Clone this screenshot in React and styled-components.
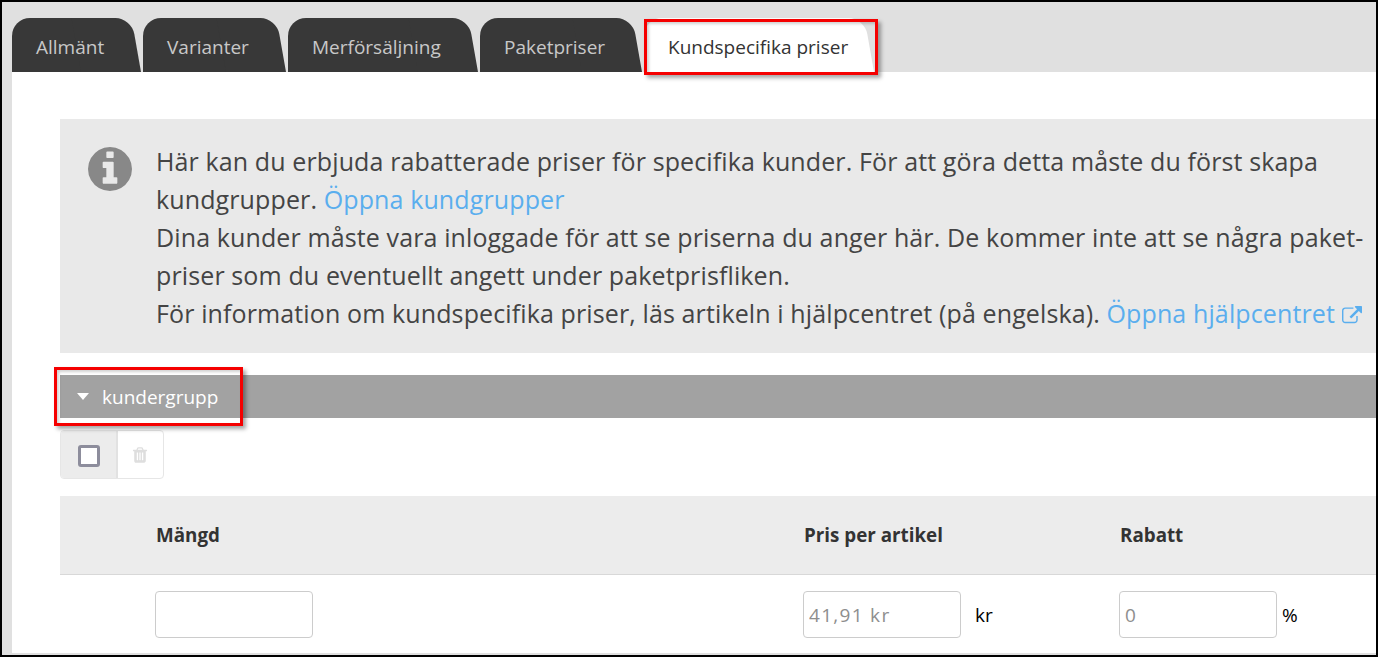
import React from "react";
import styled, { createGlobalStyle } from "styled-components";

const Global = createGlobalStyle`
  html, body { margin: 0; padding: 0; background: #fff; }
  * { box-sizing: border-box; }
`;

const Frame = styled.div`
  position: relative;
  width: 1378px;
  height: 657px;
  border: 2px solid #000;
  background: #e0e0e0;
  overflow: hidden;
  font-family: "Open Sans", sans-serif;
  color: #444;
`;

const TabBar = styled.div`
  display: flex;
  gap: 2px;
  height: 70px;
  padding: 16px 0 0 10px;
`;

const Tab = styled.div`
  position: relative;
  height: 54px;
  display: flex;
  align-items: center;
  width: ${(p) => p.$width}px;
  margin-right: 15px;
  padding: 3px 0 0 24px;
  font-size: 19px;
  color: ${(p) => (p.$active ? "#333" : "#c8c8c8")};

  &::before {
    content: "";
    position: absolute;
    top: 0;
    bottom: 0;
    left: 0;
    right: 20px;
    background: ${(p) => (p.$active ? "#fff" : "#383838")};
    border-top-left-radius: 18px;
  }
  &::after {
    content: "";
    position: absolute;
    top: 0;
    bottom: 0;
    right: -15px;
    width: 60px;
    background: ${(p) => (p.$active ? "#fff" : "#383838")};
    border-top-right-radius: 16px;
    transform: skewX(10deg);
    transform-origin: bottom right;
  }
  & > span { position: relative; z-index: 1; white-space: nowrap; }
`;

const Content = styled.div`
  margin-left: 10px;
  height: 581px;
  background: #fff;
  padding: 47px 0 0 48px;
`;

const InfoPanel = styled.div`
  display: flex;
  height: 234px;
  background: #e9e9e9;
  padding: 22.5px 0 0 28px;
`;

const InfoIcon = styled.svg`
  flex: none;
  width: 44px;
  height: 44px;
  margin-top: 5.5px;
  fill: #888;
`;

const InfoText = styled.p`
  margin: 0 0 0 24px;
  font-size: 25px;
  letter-spacing: 0.12px;
  line-height: 38px;
  white-space: nowrap;
  color: #444;
`;

const InfoLink = styled.a`
  color: #5aaeee;
  text-decoration: none;
`;

const LinkIcon = styled.svg`
  width: 20px;
  height: 20px;
  margin-left: 7px;
  vertical-align: -3px;
  fill: #5aaeee;
`;

const GroupBar = styled.div`
  display: flex;
  align-items: center;
  height: 43px;
  margin-top: 22px;
  padding-left: 17px;
  gap: 13px;
  background: #a2a2a2;
  color: #fff;
  font-size: 19px;
`;

const Caret = styled.span`
  width: 0;
  height: 0;
  border-left: 6px solid transparent;
  border-right: 6px solid transparent;
  border-top: 7px solid #fff;
`;

const ButtonGroup = styled.div`
  display: flex;
  width: 104px;
  height: 49px;
  margin-top: 12px;
  border: 1px solid #e6e6e6;
  border-radius: 4px;
  overflow: hidden;
`;

const CheckCell = styled.div`
  display: flex;
  align-items: center;
  justify-content: center;
  width: 57px;
  padding-top: 2px;
  background: #ececec;
  border-right: 2px solid #e2e2e2;
`;

const CheckBox = styled.div`
  width: 22px;
  height: 22px;
  border: 3px solid #8d8d9c;
  border-radius: 3px;
  background: #fff;
`;

const TrashCell = styled.div`
  flex: 1;
  display: flex;
  align-items: center;
  justify-content: center;
  padding-right: 2px;
`;

const TrashIcon = styled.svg`
  width: 18px;
  height: 18px;
  fill: #dedede;
`;

const Row = styled.div`
  display: grid;
  grid-template-columns: 95px 648px 316px 1fr;
`;

const HeadRow = styled(Row)`
  height: 79px;
  margin-top: 17px;
  background: #ececec;
  border-bottom: 1px solid #d8d8d8;
  align-items: center;
  font-weight: 700;
  font-size: 18.8px;
  color: #333;
`;

const BodyRow = styled(Row)`
  padding-top: 16px;
  align-items: center;
`;

const Cell = styled.div`
  display: flex;
  align-items: center;
  grid-column: ${(p) => p.$col};
`;

const HeadCell = styled.div`
  grid-column: ${(p) => p.$col};
  padding-left: 1px;
`;

const Field = styled.input`
  width: 158px;
  height: 47px;
  padding: 0 5px;
  border: 1px solid #ccc;
  border-radius: 4px;
  background: #fff;
  font-family: "Open Sans", sans-serif;
  font-size: 19px;
  letter-spacing: 1.3px;
  color: #8e8e8e;
  outline: none;
  &::placeholder { color: #8e8e8e; opacity: 1; }
`;

const Unit = styled.span`
  margin-left: ${(p) => p.$gap}px;
  font-size: 19px;
  color: #000;
`;

const Marker = styled.div`
  position: absolute;
  left: ${(p) => p.$x}px;
  top: ${(p) => p.$y}px;
  width: ${(p) => p.$w}px;
  height: ${(p) => p.$h}px;
  border: 3px solid #f50000;
  box-shadow: 3px 3px 4px rgba(0, 0, 0, 0.35), inset 2px 2px 3px rgba(0, 0, 0, 0.18);
  pointer-events: none;
`;

export default function App() {
  return (
    <Frame>
      <Global />
      <TabBar>
        <Tab $width={114}><span>Allmänt</span></Tab>
        <Tab $width={128}><span>Varianter</span></Tab>
        <Tab $width={175}><span>Merförsäljning</span></Tab>
        <Tab $width={147}><span>Paketpriser</span></Tab>
        <Tab $active $width={215}><span>Kundspecifika priser</span></Tab>
      </TabBar>
      <Content>
        <InfoPanel>
          <InfoIcon viewBox="128 128 1536 1536" aria-hidden="true">
            <path d="M1152 1376v-160q0-14-9-23t-23-9h-96v-512q0-14-9-23t-23-9h-320q-14 0-23 9t-9 23v160q0 14 9 23t23 9h96v320h-96q-14 0-23 9t-9 23v160q0 14 9 23t23 9h448q14 0 23-9t9-23zm-128-896v-160q0-14-9-23t-23-9h-192q-14 0-23 9t-9 23v160q0 14 9 23t23 9h192q14 0 23-9t9-23zm640 416q0 209-103 385.5t-279.5 279.5-385.5 103-385.5-103-279.5-279.5-103-385.5 103-385.5 279.5-279.5 385.5-103 385.5 103 279.5 279.5 103 385.5z" />
          </InfoIcon>
          <InfoText>
            Här kan du erbjuda rabatterade priser för specifika kunder. För att göra detta måste du först skapa<br />
            kundgrupper. <InfoLink>Öppna kundgrupper</InfoLink><br />
            Dina kunder måste vara inloggade för att se priserna du anger här. De kommer inte att se några paket-<br />
            priser som du eventuellt angett under paketprisfliken.<br />
            För information om kundspecifika priser, läs artikeln i hjälpcentret (på engelska). <InfoLink>Öppna hjälpcentret
              <LinkIcon viewBox="0 0 1792 1792" aria-hidden="true">
                <path d="M1408 928v320q0 119-84.5 203.5t-203.5 84.5h-832q-119 0-203.5-84.5t-84.5-203.5v-832q0-119 84.5-203.5t203.5-84.5h704q14 0 23 9t9 23v64q0 14-9 23t-23 9h-704q-66 0-113 47t-47 113v832q0 66 47 113t113 47h832q66 0 113-47t47-113v-320q0-14 9-23t23-9h64q14 0 23 9t9 23zm384-864v512q0 26-19 45t-45 19-45-19l-176-176-652 652q-10 10-23 10t-23-10l-114-114q-10-10-10-23t10-23l652-652-176-176q-19-19-19-45t19-45 45-19h512q26 0 45 19t19 45z" />
              </LinkIcon>
            </InfoLink>
          </InfoText>
        </InfoPanel>
        <GroupBar><Caret />kundergrupp</GroupBar>
        <ButtonGroup>
          <CheckCell><CheckBox /></CheckCell>
          <TrashCell>
            <TrashIcon viewBox="0 0 1792 1792" aria-hidden="true">
              <path d="M704 1376v-704q0-14-9-23t-23-9h-64q-14 0-23 9t-9 23v704q0 14 9 23t23 9h64q14 0 23-9t9-23zm256 0v-704q0-14-9-23t-23-9h-64q-14 0-23 9t-9 23v704q0 14 9 23t23 9h64q14 0 23-9t9-23zm256 0v-704q0-14-9-23t-23-9h-64q-14 0-23 9t-9 23v704q0 14 9 23t23 9h64q14 0 23-9t9-23zm-544-992h448l-48-117q-7-9-17-11h-317q-10 2-17 11zm928 32v64q0 14-9 23t-23 9h-96v948q0 83-47 143.5t-113 60.5h-832q-66 0-113-58.5t-47-141.5v-952h-96q-14 0-23-9t-9-23v-64q0-14 9-23t23-9h309l70-167q15-37 54-63t79-26h320q40 0 79 26t54 63l70 167h309q14 0 23 9t9 23z" />
            </TrashIcon>
          </TrashCell>
        </ButtonGroup>
        <HeadRow>
          <HeadCell $col={2}>Mängd</HeadCell>
          <HeadCell $col={3}>Pris per artikel</HeadCell>
          <HeadCell $col={4}>Rabatt</HeadCell>
        </HeadRow>
        <BodyRow>
          <Cell $col={2}><Field aria-label="Mängd" /></Cell>
          <Cell $col={3}><Field aria-label="Pris" placeholder="41,91 kr" /><Unit $gap={14}>kr</Unit></Cell>
          <Cell $col={4}><Field aria-label="Rabatt" placeholder="0" /><Unit $gap={5}>%</Unit></Cell>
        </BodyRow>
      </Content>
      <Marker $x={642} $y={17} $w={234} $h={56} />
      <Marker $x={52} $y={365} $w={189} $h={59} />
    </Frame>
  );
}
